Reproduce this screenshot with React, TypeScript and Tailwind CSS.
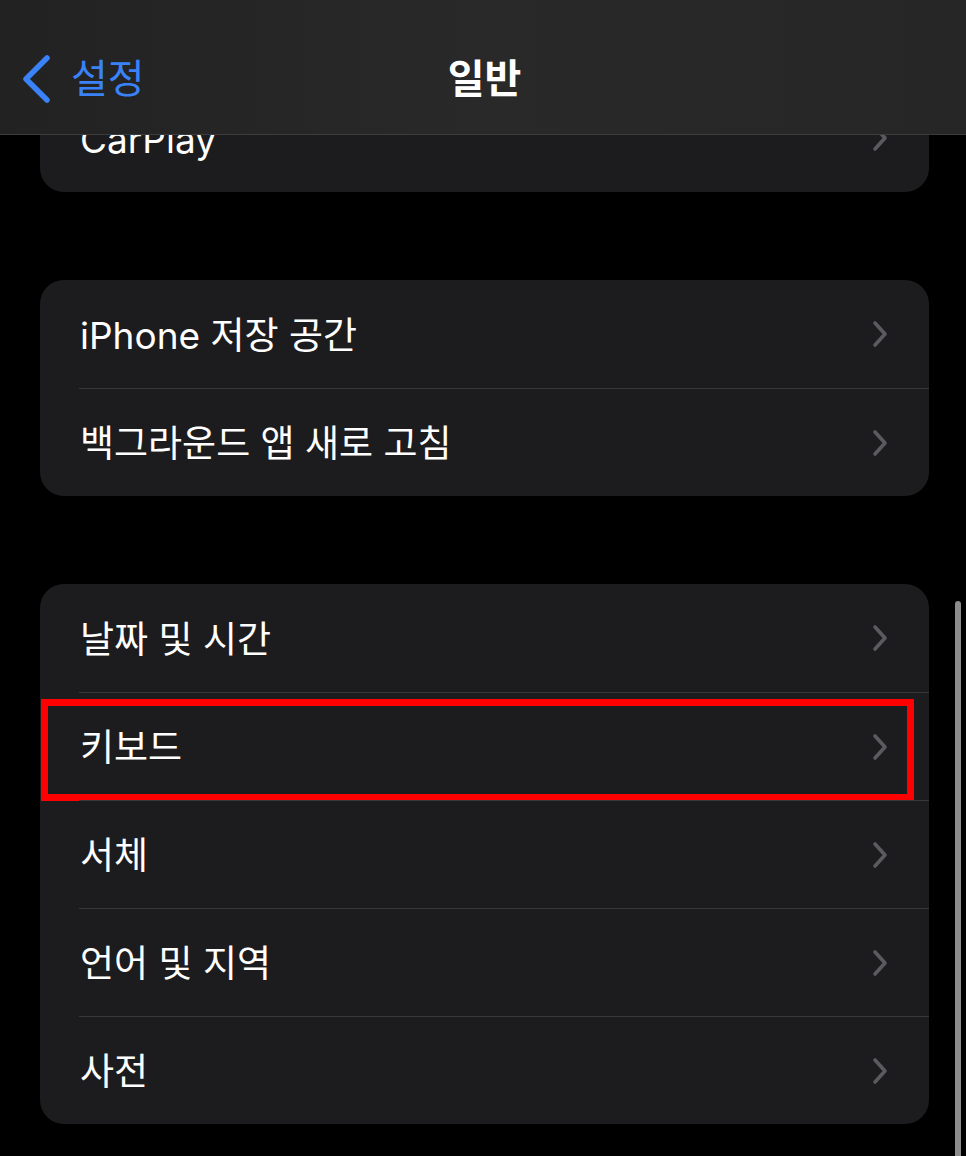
import React from "react";

const font = { fontFamily: '"Inter", "Noto Sans CJK KR", "Noto Sans", sans-serif' };

function Chevron() {
  return (
    <svg width="20" height="30" viewBox="0 0 20 30" className="shrink-0">
      <path d="M6 4 L16 15 L6 26" fill="none" stroke="#5b5b5f" strokeWidth="3.6" strokeLinecap="round" strokeLinejoin="round" />
    </svg>
  );
}

function Row({ label, first, highlight }: { label: string; first?: boolean; highlight?: boolean }) {
  return (
    <div className="relative h-[108px] pl-[39px] flex">
      <div className={`flex-1 flex items-center justify-between pr-[40px] ${first ? "" : "border-t border-[#38383a]"}`}>
        <span className="text-[37px] text-white leading-none pl-[1px] pt-[2px]">{label}</span>
        <Chevron />
      </div>
      {highlight && (
        <div className="absolute left-[1px] right-[15px] top-[7px] bottom-[-1px] border-[7px] border-[#ff0000]" />
      )}
    </div>
  );
}

function Group({ items, highlightIndex }: { items: string[]; highlightIndex?: number }) {
  return (
    <div className="ml-[40px] mr-[37px] rounded-[24px] bg-[#1c1c1e]">
      {items.map((it, i) => (
        <Row key={it} label={it} first={i === 0} highlight={i === highlightIndex} />
      ))}
    </div>
  );
}

export default function App() {
  return (
    <div className="relative w-[966px] h-[1156px] bg-black overflow-hidden" style={font}>
      <div className="flex flex-col gap-[88px] pt-[84px]">
        <Group items={["CarPlay"]} />
        <Group items={["iPhone 저장 공간", "백그라운드 앱 새로 고침"]} />
        <Group items={["날짜 및 시간", "키보드", "서체", "언어 및 지역", "사전"]} highlightIndex={1} />
      </div>

      <div className="absolute left-0 top-0 w-full h-[135px] bg-gradient-to-r from-[#222222] via-[#292929] to-[#262626] border-b border-[#3c3c3c] flex items-center">
        <div className="flex items-center pl-[21px] gap-[18px] pt-[24px]">
          <svg width="32" height="50" viewBox="0 0 32 50">
            <path d="M26 4 L5 25 L26 46" fill="none" stroke="#3a82f7" strokeWidth="5.5" strokeLinecap="round" strokeLinejoin="round" />
          </svg>
          <span className="text-[40px] text-[#3a82f7] leading-none">설정</span>
        </div>
        <div className="absolute left-0 right-0 top-[24px] bottom-0 flex items-center justify-center pointer-events-none">
          <span className="text-[40px] font-semibold text-white leading-none ml-[3px]">일반</span>
        </div>
      </div>

      <div className="absolute right-[5px] top-[601px] w-[6px] h-[600px] rounded-full bg-[#8c8c8c]" />
    </div>
  );
}
